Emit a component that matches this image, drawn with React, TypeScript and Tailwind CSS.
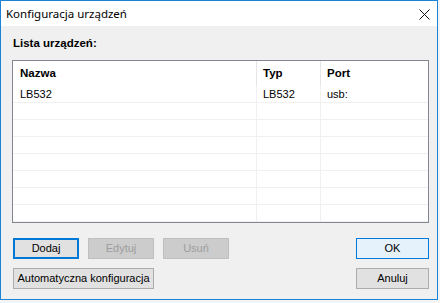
const rows = [
  { name: "LB532", type: "LB532", port: "usb:" },
  { name: "", type: "", port: "" },
  { name: "", type: "", port: "" },
  { name: "", type: "", port: "" },
  { name: "", type: "", port: "" },
  { name: "", type: "", port: "" },
  { name: "", type: "", port: "" },
  { name: "", type: "", port: "" },
];

function Btn({
  label,
  kind = "normal",
  width = "w-[66px]",
}: {
  label: string;
  kind?: "normal" | "focus" | "disabled" | "hover";
  width?: string;
}) {
  const styles = {
    normal: "border border-[#adadad] bg-[#e1e1e1] text-black",
    focus: "border-2 border-[#0078d7] bg-[#e1e1e1] text-black",
    disabled: "border border-[#bfbfbf] bg-[#cccccc] text-[#9d9d9d]",
    hover: "border border-[#0078d7] bg-[#e5f1fb] text-black",
  }[kind];
  return (
    <div
      className={`flex h-[21px] items-center justify-center text-[11px] ${width} ${styles}`}
    >
      {label}
    </div>
  );
}

export default function App() {
  return (
    <div
      className="h-[303px] w-[440px] bg-[#f4f4f4]"
      style={{ fontFamily: '"Liberation Sans", Arial, sans-serif' }}
    >
      <div className="flex h-[300px] w-[438px] flex-col border border-[#1883d7] bg-[#f0f0f0]">
        {/* title bar */}
        <div className="flex h-[25px] items-center justify-between bg-white pl-[5px]">
          <span
            className="text-[11.5px] text-black"
            style={{ fontFamily: '"Noto Sans", sans-serif' }}
          >
            Konfiguracja urządzeń
          </span>
          <svg className="mr-[7px] mt-[1px]" width="11" height="11" viewBox="0 0 11 11">
            <path d="M0.5 0.5L10.5 10.5M10.5 0.5L0.5 10.5" stroke="#111" strokeWidth="1" />
          </svg>
        </div>

        {/* body */}
        <div className="flex flex-1 flex-col px-[11px]">
          <div className="mt-[11px] ml-[1px] h-[13px] text-[11.5px] font-bold leading-[13px] text-black">
            Lista urządzeń:
          </div>

          <div className="mt-[10px] h-[163px] w-[417px] overflow-hidden border border-[#828790] bg-white text-[11px] text-black">
            <div className="flex h-[25px] text-[11.5px] font-bold">
              <div className="flex w-[244px] items-center border-r border-[#e5e5e5] pl-[7px] pt-[1px]">
                Nazwa
              </div>
              <div className="flex w-[64px] items-center border-r border-[#e5e5e5] pl-[6px] pt-[1px]">
                Typ
              </div>
              <div className="flex flex-1 items-center pl-[6px] pt-[1px]">Port</div>
            </div>
            {rows.map((r, i) => (
              <div key={i} className="flex h-[17px] border-b border-[#f0f0f0]">
                <div className="flex w-[244px] items-center border-r border-[#f0f0f0] pl-[7px]">
                  {r.name}
                </div>
                <div className="flex w-[64px] items-center border-r border-[#f0f0f0] pl-[6px]">
                  {r.type}
                </div>
                <div className="flex flex-1 items-center pl-[6px]">{r.port}</div>
              </div>
            ))}
          </div>

          <div className="mt-[15px] flex w-[417px] justify-between">
            <div className="ml-[1px] flex gap-[9px]">
              <Btn label="Dodaj" kind="focus" />
              <Btn label="Edytuj" kind="disabled" />
              <Btn label="Usuń" kind="disabled" />
            </div>
            <Btn label="OK" kind="hover" width="w-[73px]" />
          </div>

          <div className="mt-[9px] flex w-[417px] justify-between">
            <div className="ml-[1px]">
              <Btn label="Automatyczna konfiguracja" width="w-[141px]" />
            </div>
            <Btn label="Anuluj" width="w-[73px]" />
          </div>
        </div>
      </div>
    </div>
  );
}
